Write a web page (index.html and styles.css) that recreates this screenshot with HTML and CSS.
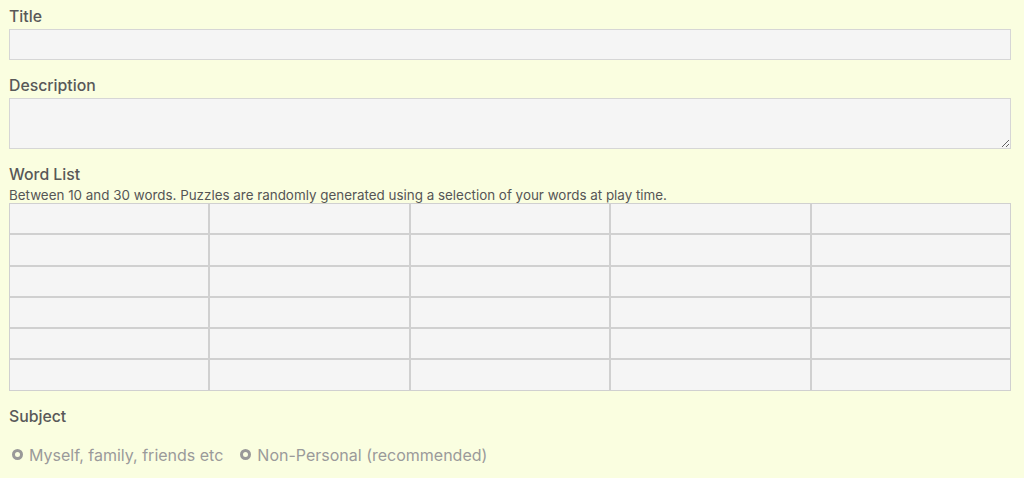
FILE: index.html
```html
<!DOCTYPE html>
<html>
<head>
<meta charset="utf-8">
<link rel="stylesheet" href="styles.css">
</head>
<body>
<form class="form">
  <div class="field">
    <label class="label">Title</label>
    <input class="input" type="text">
  </div>
  <div class="field">
    <label class="label">Description</label>
    <textarea class="input textarea"></textarea>
  </div>
  <div class="field">
    <label class="label">Word List</label>
    <div class="help">Between 10 and 30 words. Puzzles are randomly generated using a selection of your words at play time.</div>
    <div class="grid">
      <input class="cell"><input class="cell"><input class="cell"><input class="cell"><input class="cell">
      <input class="cell"><input class="cell"><input class="cell"><input class="cell"><input class="cell">
      <input class="cell"><input class="cell"><input class="cell"><input class="cell"><input class="cell">
      <input class="cell"><input class="cell"><input class="cell"><input class="cell"><input class="cell">
      <input class="cell"><input class="cell"><input class="cell"><input class="cell"><input class="cell">
      <input class="cell"><input class="cell"><input class="cell"><input class="cell"><input class="cell">
    </div>
  </div>
  <div class="field">
    <label class="label">Subject</label>
    <div class="radios">
      <label class="radio"><span class="dot"></span>Myself, family, friends etc</label>
      <label class="radio"><span class="dot"></span>Non-Personal (recommended)</label>
    </div>
  </div>
</form>
</body>
</html>
```
FILE: styles.css
```css
html, body {
  margin: 0;
  padding: 0;
  background: #fafee0;
}
body {
  font-family: Inter, "Noto Sans", sans-serif;
  color: #555;
}
.form {
  width: 1002px;
  margin-left: 9px;
  padding-top: 5px;
}
.field {
  display: flex;
  flex-direction: column;
  margin-bottom: 14px;
}
.label {
  font-size: 15.8px;
  font-weight: 500;
  color: #585858;
  line-height: 20px;
  padding-top: 2px;
  margin-bottom: 2px;
}
.input {
  box-sizing: border-box;
  width: 1002px;
  height: 31px;
  margin: 0;
  border: 1px solid #d6d6d6;
  background: #f5f5f5;
  font: inherit;
  outline: none;
}
.textarea {
  height: 51px;
  resize: vertical;
  display: block;
}
.help {
  font-size: 13.4px;
  line-height: 16px;
  color: #555;
}
.grid {
  display: grid;
  grid-template-columns: repeat(5, 1fr);
  grid-auto-rows: 31.3px;
  width: 1002px;
}
.cell {
  box-sizing: border-box;
  width: 100%;
  height: 100%;
  margin: 0;
  border: 1px solid #d0d0d0;
  background: #f5f5f5;
  outline: none;
}
.radios {
  display: flex;
  gap: 17px;
  margin-top: 16px;
  padding-left: 3px;
}
.radio {
  display: flex;
  align-items: center;
  font-size: 16px;
  color: #9a9a9a;
  line-height: 20px;
}
.dot {
  box-sizing: border-box;
  width: 11px;
  height: 11px;
  border: 3px solid #999;
  border-radius: 50%;
  margin-right: 6px;
}
```
